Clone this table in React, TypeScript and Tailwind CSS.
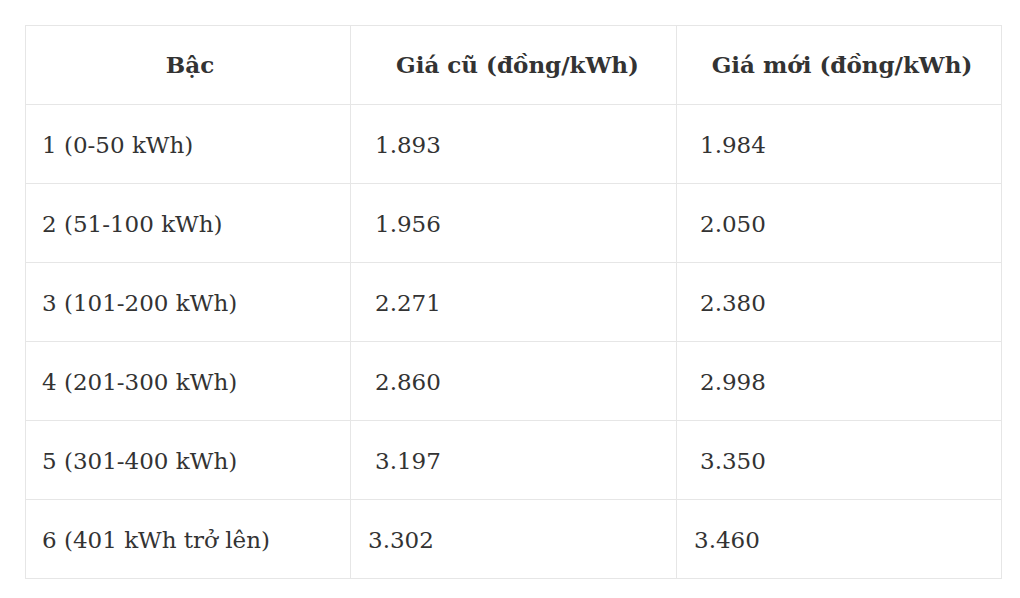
const rows = [
  ['1 (0-50 kWh)', '1.893', '1.984', true],
  ['2 (51-100 kWh)', '1.956', '2.050', true],
  ['3 (101-200 kWh)', '2.271', '2.380', true],
  ['4 (201-300 kWh)', '2.860', '2.998', true],
  ['5 (301-400 kWh)', '3.197', '3.350', true],
  ['6 (401 kWh trở lên)', '3.302', '3.460', false],
] as const;

export default function App() {
  return (
    <div className="w-[1020px] h-[598px] bg-white pl-[25px] pt-[25px] text-[#333]" style={{ fontFamily: '"DejaVu Serif", "Liberation Serif", serif' }}>
      <table className="border-collapse table-fixed w-[976px] text-[23px]">
        <colgroup>
          <col className="w-[325px]" />
          <col className="w-[326px]" />
          <col className="w-[325px]" />
        </colgroup>
        <thead>
          <tr className="h-[79px]">
            <th className="border border-[#e6e6e6] font-bold text-center pl-[4px]">Bậc</th>
            <th className="border border-[#e6e6e6] font-bold text-center pl-[8px]">Giá cũ (đồng/kWh)</th>
            <th className="border border-[#e6e6e6] font-bold text-center pl-[6px]">Giá mới (đồng/kWh)</th>
          </tr>
        </thead>
        <tbody>
          {rows.map(([step, oldPrice, newPrice, indent]) => (
            <tr key={step} className="h-[79px]">
              <td className="border border-[#e6e6e6] pl-[16px] pt-[2px]">{step}</td>
              <td className={`border border-[#e6e6e6] pt-[2px] ${indent ? 'pl-[24px]' : 'pl-[17px]'}`}>{oldPrice}</td>
              <td className={`border border-[#e6e6e6] pt-[2px] ${indent ? 'pl-[23px]' : 'pl-[17px]'}`}>{newPrice}</td>
            </tr>
          ))}
        </tbody>
      </table>
    </div>
  );
}
